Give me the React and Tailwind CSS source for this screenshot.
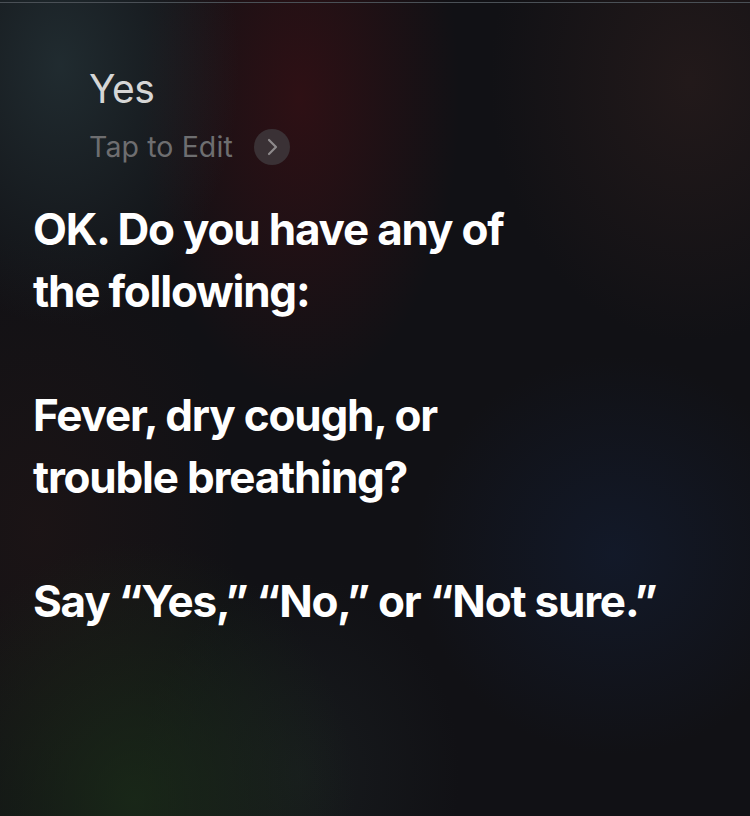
export default function App() {
  return (
    <div
      className="w-[750px] h-[816px] overflow-hidden bg-[#111115] bg-[radial-gradient(ellipse_180px_260px_at_8%_8%,rgba(45,65,70,0.55),transparent),radial-gradient(ellipse_160px_300px_at_40%_12%,rgba(75,15,20,0.5),transparent),radial-gradient(ellipse_200px_260px_at_92%_10%,rgba(55,35,32,0.45),transparent),radial-gradient(ellipse_220px_260px_at_18%_98%,rgba(28,48,25,0.7),transparent),radial-gradient(ellipse_160px_200px_at_40%_95%,rgba(35,45,45,0.35),transparent),radial-gradient(ellipse_200px_200px_at_82%_68%,rgba(20,35,65,0.45),transparent),radial-gradient(ellipse_200px_300px_at_5%_65%,rgba(45,25,22,0.35),transparent)]"
      style={{ fontFamily: '"Inter", "Liberation Sans", sans-serif' }}
    >
      <div className="h-[1px] mt-[2px] bg-[#4a5056]" />
      <div className="pl-[89px] pt-[62px]">
        <div className="text-[39px] leading-[48px] text-[#d6d6d6] tracking-[-0.5px]">Yes</div>
        <div className="flex items-center gap-[21px] mt-[16px]">
          <span className="text-[28.5px] leading-[34px] text-[#6e6e70] tracking-[0.1px]">Tap to Edit</span>
          <span className="w-[36px] h-[36px] rounded-full bg-[#3a3135] flex items-center justify-center">
            <svg width="16" height="20" viewBox="0 0 16 20" fill="none">
              <path d="M5 3l7 7-7 7" stroke="#8e8a8c" strokeWidth="2.2" strokeLinecap="round" strokeLinejoin="round" />
            </svg>
          </span>
        </div>
      </div>
      <div className="pl-[33px] pt-[33px] text-white font-bold text-[44px] leading-[62px] tracking-[-1.2px]">
        <div>OK. Do you have any of</div>
        <div>the following:</div>
        <div className="h-[62px]" />
        <div>Fever, dry cough, or</div>
        <div>trouble breathing?</div>
        <div className="h-[62px]" />
        <div>Say “Yes,” “No,” or “Not sure.”</div>
      </div>
    </div>
  );
}
